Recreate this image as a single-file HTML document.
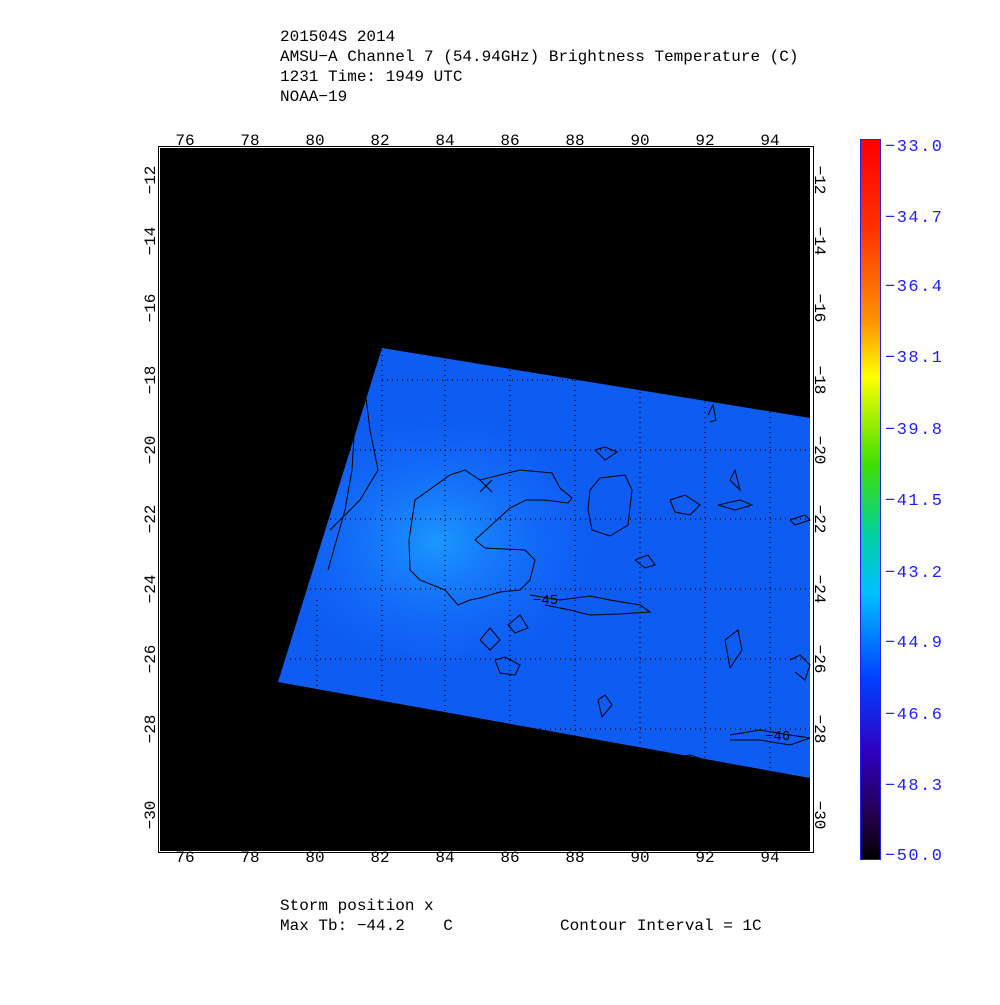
<!DOCTYPE html>
<html><head><meta charset="utf-8"><style>
body{margin:0;background:#fff;}
svg text{font-family:"Liberation Mono","DejaVu Sans Mono",monospace;white-space:pre;}
</style></head><body>
<svg width="1000" height="1000" viewBox="0 0 1000 1000" xmlns="http://www.w3.org/2000/svg">
<defs>
<linearGradient id="cb" x1="0" y1="0" x2="0" y2="1">
<stop offset="0" stop-color="#ff0000"/>
<stop offset="0.12" stop-color="#ff3000"/>
<stop offset="0.25" stop-color="#ff9000"/>
<stop offset="0.33" stop-color="#ffff00"/>
<stop offset="0.45" stop-color="#40e000"/>
<stop offset="0.55" stop-color="#00d0a0"/>
<stop offset="0.63" stop-color="#00c0ff"/>
<stop offset="0.75" stop-color="#0040ff"/>
<stop offset="0.85" stop-color="#3000c0"/>
<stop offset="0.95" stop-color="#200040"/>
<stop offset="1" stop-color="#000000"/>
</linearGradient>
<radialGradient id="lb" cx="0.3" cy="0.45" r="0.3">
<stop offset="0" stop-color="#1a98ff"/>
<stop offset="1" stop-color="#1a70ff" stop-opacity="0"/>
</radialGradient>
</defs>
<g font-size="16" fill="#000">
<text x="280" y="41">201504S 2014</text>
<text x="280" y="61">AMSU−A Channel 7 (54.94GHz) Brightness Temperature (C)</text>
<text x="280" y="81">1231 Time: 1949 UTC</text>
<text x="280" y="101">NOAA−19</text>
<text x="280" y="910">Storm position x</text>
<text x="280" y="930">Max Tb: −44.2    C</text>
<text x="560" y="930">Contour Interval = 1C</text>
</g>
<rect x="158.5" y="146.5" width="655" height="706" fill="none" stroke="#000"/>
<rect x="160" y="148" width="650" height="703" fill="#000"/>
<polygon points="382,348 810,418 810,778 278,682" fill="#0e5cf2"/>
<polygon points="382,348 810,418 810,778 278,682" fill="url(#lb)"/>
<g stroke="#000" stroke-width="1.2" stroke-dasharray="1,4" fill="none">
<line x1="382" y1="380" x2="810" y2="380"/><line x1="350" y1="450" x2="810" y2="450"/>
<line x1="330" y1="519" x2="810" y2="519"/><line x1="310" y1="589" x2="810" y2="589"/>
<line x1="290" y1="659" x2="810" y2="659"/><line x1="480" y1="729" x2="810" y2="729"/>
<line x1="317" y1="600" x2="317" y2="690"/><line x1="382" y1="350" x2="382" y2="700"/>
<line x1="445" y1="360" x2="445" y2="712"/><line x1="510" y1="370" x2="510" y2="725"/>
<line x1="575" y1="380" x2="575" y2="738"/><line x1="640" y1="392" x2="640" y2="750"/>
<line x1="705" y1="402" x2="705" y2="762"/><line x1="770" y1="412" x2="770" y2="772"/>
</g>
<g stroke="#000" stroke-width="1" fill="none">
<polyline points="409,540 415,500 450,475 465,470 480,480 520,470 552,473 560,488 572,498 568,503 545,500 526,500 510,508 475,540 485,548 525,550 535,560 530,580 520,590 500,592 480,598 470,600 458,605 445,590 420,580 410,570 409,540"/>
<polyline points="590,490 600,478 625,475 632,490 628,525 610,536 592,530 588,510 590,490"/>
<polyline points="530,595 560,600 590,596 610,600 640,605 650,612 620,614 590,615 570,610 545,605"/>
<polyline points="495,660 505,657 520,665 515,675 500,673 495,660"/>
<polyline points="595,450 605,447 617,452 605,460 595,450"/>
<polyline points="670,500 685,495 700,505 690,515 675,512 670,500"/>
<polyline points="730,480 735,470 740,490 730,480"/>
<polyline points="718,505 740,500 752,505 735,510 718,505"/>
<polyline points="635,560 648,555 655,565 645,568 635,560"/>
<polyline points="790,520 805,515 810,520 795,525 790,520"/>
<polyline points="730,735 760,730 790,735 810,738 790,745 760,740 730,740"/>
<polyline points="598,700 605,695 612,705 602,717 598,700"/>
<polyline points="725,640 738,630 742,650 730,668 725,640"/>
<polyline points="790,660 800,655 810,665 805,680 795,672"/>
<polyline points="365,390 370,430 378,470 360,500 330,530"/>
<polyline points="355,420 352,470 345,510 328,570"/>
<polyline points="650,760 690,755 720,765 745,770"/>
<polyline points="480,640 490,628 500,640 490,650 480,640"/>
<polyline points="508,625 520,615 528,628 515,633 508,625"/>
<line x1="480" y1="480" x2="492" y2="492"/><line x1="492" y1="480" x2="480" y2="492"/>
<polyline points="708,415 713,405 716,420 710,422"/>
</g>
<text x="533" y="604" font-size="14" fill="#000">−45</text>
<text x="765" y="740" font-size="14" fill="#000">−46</text>
<g font-size="16" fill="#000" text-anchor="middle">
<text x="185" y="145">76</text><text x="250" y="145">78</text><text x="315" y="145">80</text><text x="380" y="145">82</text><text x="445" y="145">84</text><text x="510" y="145">86</text><text x="575" y="145">88</text><text x="640" y="145">90</text><text x="705" y="145">92</text><text x="770" y="145">94</text>
<text x="185" y="862">76</text><text x="250" y="862">78</text><text x="315" y="862">80</text><text x="380" y="862">82</text><text x="445" y="862">84</text><text x="510" y="862">86</text><text x="575" y="862">88</text><text x="640" y="862">90</text><text x="705" y="862">92</text><text x="770" y="862">94</text>
</g>
<g font-size="16" fill="#000" text-anchor="middle">
<text transform="translate(155,180) rotate(-90)">−12</text>
<text transform="translate(155,241) rotate(-90)">−14</text>
<text transform="translate(155,308) rotate(-90)">−16</text>
<text transform="translate(155,380) rotate(-90)">−18</text>
<text transform="translate(155,450) rotate(-90)">−20</text>
<text transform="translate(155,519) rotate(-90)">−22</text>
<text transform="translate(155,589) rotate(-90)">−24</text>
<text transform="translate(155,659) rotate(-90)">−26</text>
<text transform="translate(155,729) rotate(-90)">−28</text>
<text transform="translate(155,815) rotate(-90)">−30</text>
<text transform="translate(815,180) rotate(90)">−12</text>
<text transform="translate(815,241) rotate(90)">−14</text>
<text transform="translate(815,308) rotate(90)">−16</text>
<text transform="translate(815,380) rotate(90)">−18</text>
<text transform="translate(815,450) rotate(90)">−20</text>
<text transform="translate(815,519) rotate(90)">−22</text>
<text transform="translate(815,589) rotate(90)">−24</text>
<text transform="translate(815,659) rotate(90)">−26</text>
<text transform="translate(815,729) rotate(90)">−28</text>
<text transform="translate(815,815) rotate(90)">−30</text>
</g>
<rect x="860.5" y="139.5" width="20" height="720" fill="url(#cb)" stroke="#2020ff"/>
<g font-size="17" fill="#2020ff" letter-spacing="1.5">
<text x="885" y="151">−33.0</text><text x="885" y="222">−34.7</text><text x="885" y="291">−36.4</text><text x="885" y="362">−38.1</text><text x="885" y="434">−39.8</text><text x="885" y="505">−41.5</text><text x="885" y="577">−43.2</text><text x="885" y="647">−44.9</text><text x="885" y="719">−46.6</text><text x="885" y="790">−48.3</text><text x="885" y="860">−50.0</text>
</g>
</svg>
</body></html>
